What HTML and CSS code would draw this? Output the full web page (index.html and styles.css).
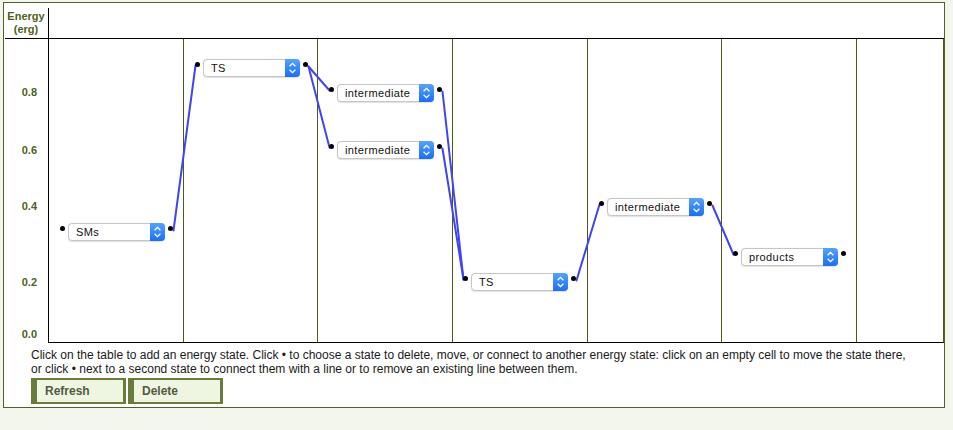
FILE: index.html
```html
<!DOCTYPE html>
<html>
<head>
<meta charset="utf-8">
<link rel="stylesheet" href="styles.css">
</head>
<body>
<div class="panel">
  <div class="chart">
    <div class="corner">Energy<br>(erg)</div>
    <div class="head"></div>
    <div class="rule"></div>
    <div class="axis">
      <span class="tick" style="top:47px">0.8</span>
      <span class="tick" style="top:105px">0.6</span>
      <span class="tick" style="top:161px">0.4</span>
      <span class="tick" style="top:237px">0.2</span>
      <span class="tick" style="top:289px">0.0</span>
    </div>
    <div class="plot">
      <div class="col"></div><div class="col"></div><div class="col"></div><div class="col"></div><div class="col"></div><div class="col"></div><div class="col last"></div>
      <svg class="links" width="894" height="303" viewBox="0 0 894 303">
        <g stroke="#4343f2" stroke-width="2" fill="none" stroke-linecap="round">
          <line x1="124.5" y1="191.5" x2="146.5" y2="26.5"/>
          <line x1="259.5" y1="27.5" x2="280.5" y2="51.5"/>
          <line x1="259.5" y1="27.5" x2="280.5" y2="108.5"/>
          <line x1="393.5" y1="52.5" x2="414.5" y2="240.5"/>
          <line x1="393.5" y1="109.5" x2="414.5" y2="240.5"/>
          <line x1="527.5" y1="241.5" x2="550.5" y2="165.5"/>
          <line x1="663.5" y1="166.5" x2="684.5" y2="215.5"/>
        </g>
      </svg>
      <div class="state" style="left:11px;top:184px"><span class="dot"></span><span class="select"><span class="label">SMs</span><span class="stepper"><svg width="15" height="16" viewBox="0 0 15 16"><path d="M4.6 6.2 L7.5 3.4 L10.4 6.2 M4.6 9.8 L7.5 12.6 L10.4 9.8" stroke="#fff" stroke-width="1.3" fill="none"/></svg></span></span><span class="dot"></span></div>
      <div class="state" style="left:146px;top:20px"><span class="dot"></span><span class="select"><span class="label">TS</span><span class="stepper"><svg width="15" height="16" viewBox="0 0 15 16"><path d="M4.6 6.2 L7.5 3.4 L10.4 6.2 M4.6 9.8 L7.5 12.6 L10.4 9.8" stroke="#fff" stroke-width="1.3" fill="none"/></svg></span></span><span class="dot"></span></div>
      <div class="state" style="left:280px;top:45px"><span class="dot"></span><span class="select"><span class="label">intermediate</span><span class="stepper"><svg width="15" height="16" viewBox="0 0 15 16"><path d="M4.6 6.2 L7.5 3.4 L10.4 6.2 M4.6 9.8 L7.5 12.6 L10.4 9.8" stroke="#fff" stroke-width="1.3" fill="none"/></svg></span></span><span class="dot"></span></div>
      <div class="state" style="left:280px;top:102px"><span class="dot"></span><span class="select"><span class="label">intermediate</span><span class="stepper"><svg width="15" height="16" viewBox="0 0 15 16"><path d="M4.6 6.2 L7.5 3.4 L10.4 6.2 M4.6 9.8 L7.5 12.6 L10.4 9.8" stroke="#fff" stroke-width="1.3" fill="none"/></svg></span></span><span class="dot"></span></div>
      <div class="state" style="left:414px;top:234px"><span class="dot"></span><span class="select"><span class="label">TS</span><span class="stepper"><svg width="15" height="16" viewBox="0 0 15 16"><path d="M4.6 6.2 L7.5 3.4 L10.4 6.2 M4.6 9.8 L7.5 12.6 L10.4 9.8" stroke="#fff" stroke-width="1.3" fill="none"/></svg></span></span><span class="dot"></span></div>
      <div class="state" style="left:550px;top:159px"><span class="dot"></span><span class="select"><span class="label">intermediate</span><span class="stepper"><svg width="15" height="16" viewBox="0 0 15 16"><path d="M4.6 6.2 L7.5 3.4 L10.4 6.2 M4.6 9.8 L7.5 12.6 L10.4 9.8" stroke="#fff" stroke-width="1.3" fill="none"/></svg></span></span><span class="dot"></span></div>
      <div class="state" style="left:684px;top:209px"><span class="dot"></span><span class="select"><span class="label">products</span><span class="stepper"><svg width="15" height="16" viewBox="0 0 15 16"><path d="M4.6 6.2 L7.5 3.4 L10.4 6.2 M4.6 9.8 L7.5 12.6 L10.4 9.8" stroke="#fff" stroke-width="1.3" fill="none"/></svg></span></span><span class="dot"></span></div>
    </div>
  </div>
  <p class="help">Click on the table to add an energy state. Click &bull; to choose a state to delete, move, or connect to another energy state: click on an empty cell to move the state there,<br>or click &bull; next to a second state to connect them with a line or to remove an existing line between them.</p>
  <div class="actions">
    <button class="btn">Refresh</button>
    <button class="btn">Delete</button>
  </div>
</div>
</body>
</html>
```
FILE: styles.css
```css
* { box-sizing: border-box; }
html, body { margin: 0; padding: 0; }
body {
  background: #f3f6ec;
  font-family: "Liberation Sans", Arial, sans-serif;
  width: 953px;
  height: 430px;
  overflow: hidden;
}
.panel {
  margin: 2px 0 0 3px;
  width: 942px;
  border: 1px solid #4f6228;
  background: #fff;
  padding-bottom: 3px;
}
.chart {
  display: grid;
  grid-template-columns: 44px 896px;
}
.corner {
  height: 35px;
  padding-top: 7px;
  text-align: center;
  font-weight: bold;
  font-size: 11px;
  line-height: 13px;
  color: #4f6024;
}
.head {
  margin-top: 5px;
  border-left: 1px solid #000;
  height: 30px;
}
.rule {
  grid-column: 1 / -1;
  height: 1px;
  margin-left: 1px;
  background: #000;
}
.axis {
  position: relative;
  height: 304px;
}
.tick {
  position: absolute;
  right: 11px;
  font-weight: bold;
  font-size: 11px;
  line-height: 13px;
  color: #4f6024;
}
.plot {
  position: relative;
  height: 304px;
  border-left: 1px solid #000;
  border-right: 1px solid #4b5a1e;
  border-bottom: 1px solid #000;
  display: grid;
  grid-template-columns: 135px 134px 135px 135px 134px 135px 1fr;
}
.col {
  border-right: 1px solid #4b5a1e;
}
.col.last { border-right: 0; }
.links {
  position: absolute;
  left: 0;
  top: 0;
}
.state {
  position: absolute;
  display: flex;
  align-items: flex-start;
  gap: 3px;
}
.dot {
  width: 5px;
  height: 5px;
  margin-top: 3px;
  border-radius: 50%;
  background: #000;
}
.select {
  width: 97px;
  height: 18px;
  display: flex;
  border: 1px solid #c6c6c6;
  border-radius: 4px;
  background: #fff;
  box-shadow: 0 0.5px 1px rgba(0,0,0,0.12);
}
.label {
  flex: 1;
  padding-left: 7px;
  font-family: "Liberation Sans", Arial, sans-serif;
  font-size: 11px;
  letter-spacing: 0.4px;
  line-height: 16px;
  color: #111;
}
.stepper {
  width: 15px;
  margin: -1px -1px -1px 0;
  height: 18px;
  padding-top: 1px;
  border-radius: 0 4px 4px 0;
  background: linear-gradient(#55a3fc, #1c6ef3);
}
.stepper svg { display: block; }
.help {
  margin: 5px 0 0 27px;
  font-size: 12px;
  line-height: 14px;
  color: #1a1a1a;
}
.actions {
  display: flex;
  gap: 2px;
  margin: 2px 0 0 27px;
}
.btn {
  width: 95px;
  height: 26px;
  border-style: solid;
  border-color: #6b7b3b;
  border-width: 2px 3px 2px 6px;
  background: #eef5e1;
  padding: 0 0 0 8px;
  text-align: left;
  font-family: "Liberation Sans", Arial, sans-serif;
  font-weight: bold;
  font-size: 12px;
  color: #525a41;
}
```
